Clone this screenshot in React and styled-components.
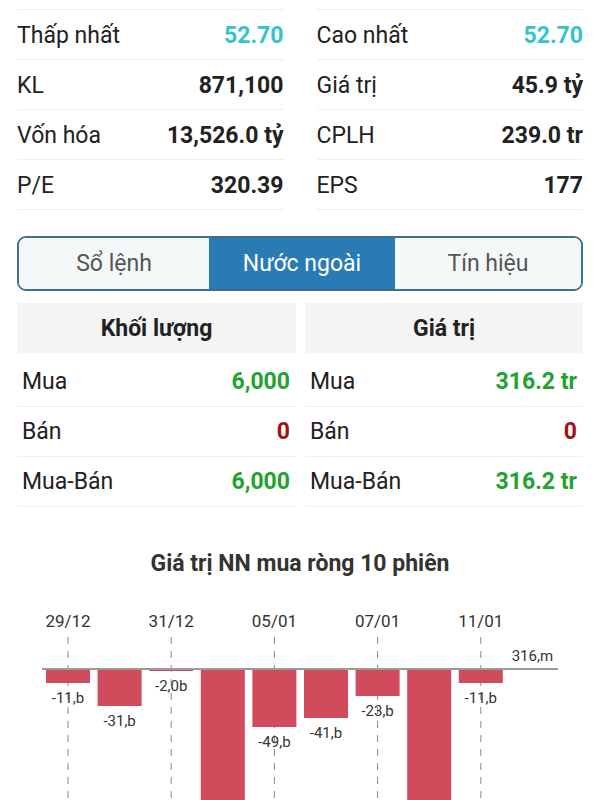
import styled, { createGlobalStyle } from "styled-components";

const GlobalStyle = createGlobalStyle`
  html, body {
    margin: 0;
    padding: 0;
    background: #fff;
    font-family: Roboto, "Noto Sans", "Liberation Sans", sans-serif;
    color: #222;
  }
`;

const stats = [
  [
    { label: "Thấp nhất", value: "52.70", tone: "ref" },
    { label: "KL", value: "871,100" },
    { label: "Vốn hóa", value: "13,526.0 tỷ" },
    { label: "P/E", value: "320.39" },
  ],
  [
    { label: "Cao nhất", value: "52.70", tone: "ref" },
    { label: "Giá trị", value: "45.9 tỷ" },
    { label: "CPLH", value: "239.0 tr" },
    { label: "EPS", value: "177" },
  ],
];

const foreign = [
  {
    title: "Khối lượng",
    rows: [
      { label: "Mua", value: "6,000", tone: "up" },
      { label: "Bán", value: "0", tone: "down" },
      { label: "Mua-Bán", value: "6,000", tone: "up" },
    ],
  },
  {
    title: "Giá trị",
    rows: [
      { label: "Mua", value: "316.2 tr", tone: "up" },
      { label: "Bán", value: "0", tone: "down" },
      { label: "Mua-Bán", value: "316.2 tr", tone: "up" },
    ],
  },
];

const tabs = ["Sổ lệnh", "Nước ngoài", "Tín hiệu"];

// bottoms are in chart pixels (zero line sits at y=78)
const bars = [
  { date: "29/12", bottom: 92, label: "-11,b" },
  { bottom: 115, label: "-31,b" },
  { date: "31/12", bottom: 80, label: "-2,0b" },
  { bottom: 240 },
  { date: "05/01", bottom: 136, label: "-49,b" },
  { bottom: 127, label: "-41,b" },
  { date: "07/01", bottom: 105, label: "-23,b" },
  { bottom: 240 },
  { date: "11/01", bottom: 92, label: "-11,b" },
  { bottom: 77, label: "316,m", up: true },
];

const toneColor = {
  ref: "#33c4cc",
  up: "#22a22f",
  down: "#a50f15",
};

const Page = styled.div`
  width: 600px;
  height: 800px;
  overflow: hidden;
`;

const StatsGrid = styled.div`
  display: grid;
  grid-template-columns: 1fr 1fr;
  column-gap: 33px;
  padding: 9px 17px 0;
`;

const StatCol = styled.div`
  border-top: 1px solid #efefef;
`;

const StatRow = styled.div`
  display: flex;
  align-items: center;
  justify-content: space-between;
  box-sizing: border-box;
  height: 50px;
  padding-top: 2px;
  border-bottom: 1px solid #efefef;
  font-size: 23px;
`;

const Label = styled.span`
  color: #222;
  font-weight: 400;
`;

const Value = styled.span`
  font-weight: 700;
  color: ${({ $tone }) => toneColor[$tone] || "#222"};
`;

const Tabs = styled.div`
  display: grid;
  grid-template-columns: 190px 186px 1fr;
  margin: 26px 17px 0;
  height: 51px;
  border: 2px solid #3f6f8e;
  border-radius: 9px;
  overflow: hidden;
`;

const Tab = styled.div`
  display: flex;
  align-items: center;
  justify-content: center;
  font-size: 23px;
  font-weight: 400;
  background: ${({ $active }) => ($active ? "#2a7bb4" : "#f5f8f9")};
  color: ${({ $active }) => ($active ? "#fff" : "#555")};
`;

const ForeignGrid = styled.div`
  display: grid;
  grid-template-columns: 279px 1fr;
  column-gap: 9px;
  margin: 12px 17px 0;
`;

const HeadCell = styled.div`
  height: 50px;
  display: flex;
  align-items: center;
  justify-content: center;
  background: #f4f4f4;
  font-size: 23px;
  font-weight: 700;
  color: #222;
  margin-bottom: 4px;
`;

const ForeignRow = styled.div`
  display: flex;
  align-items: center;
  justify-content: space-between;
  height: 49px;
  padding: 0 6px 0 5px;
  border-bottom: 1px solid #efefef;
  font-size: 23px;
`;

const ChartTitle = styled.div`
  margin-top: 42px;
  height: 30px;
  line-height: 30px;
  text-align: center;
  font-size: 23px;
  font-weight: 700;
  color: #333;
`;

const ChartSvg = styled.svg`
  display: block;
  margin-top: 12px;
`;

function NetChart() {
  const step = 51.6;
  const left = 46;
  const w = 44;
  return (
    <ChartSvg width="600" height="210" viewBox="0 0 600 210">
      {bars.map((b, i) => {
        const cx = left + i * step + w / 2;
        return b.date ? (
          <g key={"d" + i}>
            <text
              x={cx}
              y={36}
              textAnchor="middle"
              fontSize="17"
              fill="#333"
              fontFamily="Roboto, sans-serif"
            >
              {b.date}
            </text>
            <line
              x1={cx}
              x2={cx}
              y1={46}
              y2={210}
              stroke="#8a8a8a"
              strokeWidth="1"
              strokeDasharray="7 7"
            />
          </g>
        ) : null;
      })}
      {bars.map((b, i) => {
        const x = left + i * step;
        return b.up ? null : (
          <rect key={"b" + i} x={x} y={78} width={w} height={b.bottom - 78} fill="#d24b5c" />
        );
      })}
      <line x1={42} x2={558} y1={78} y2={78} stroke="#9a9a9a" strokeWidth="2" />
      {bars.map((b, i) => {
        if (!b.label) return null;
        const cx = left + i * step + w / 2;
        const y = b.up ? 70 : b.bottom + 20;
        return (
          <text
            key={"l" + i}
            x={cx}
            y={y}
            textAnchor="middle"
            fontSize="15"
            fill="#333"
            fontFamily="Roboto, sans-serif"
          >
            {b.label}
          </text>
        );
      })}
    </ChartSvg>
  );
}

export default function App() {
  return (
    <Page>
      <GlobalStyle />
      <StatsGrid>
        {stats.map((col, ci) => (
          <StatCol key={ci}>
            {col.map((s) => (
              <StatRow key={s.label}>
                <Label>{s.label}</Label>
                <Value $tone={s.tone}>{s.value}</Value>
              </StatRow>
            ))}
          </StatCol>
        ))}
      </StatsGrid>

      <Tabs>
        {tabs.map((t, i) => (
          <Tab key={t} $active={i === 1}>
            {t}
          </Tab>
        ))}
      </Tabs>

      <ForeignGrid>
        {foreign.map((col) => (
          <div key={col.title}>
            <HeadCell>{col.title}</HeadCell>
            {col.rows.map((r) => (
              <ForeignRow key={r.label}>
                <Label>{r.label}</Label>
                <Value $tone={r.tone}>{r.value}</Value>
              </ForeignRow>
            ))}
          </div>
        ))}
      </ForeignGrid>

      <ChartTitle>Giá trị NN mua ròng 10 phiên</ChartTitle>
      <NetChart />
    </Page>
  );
}
